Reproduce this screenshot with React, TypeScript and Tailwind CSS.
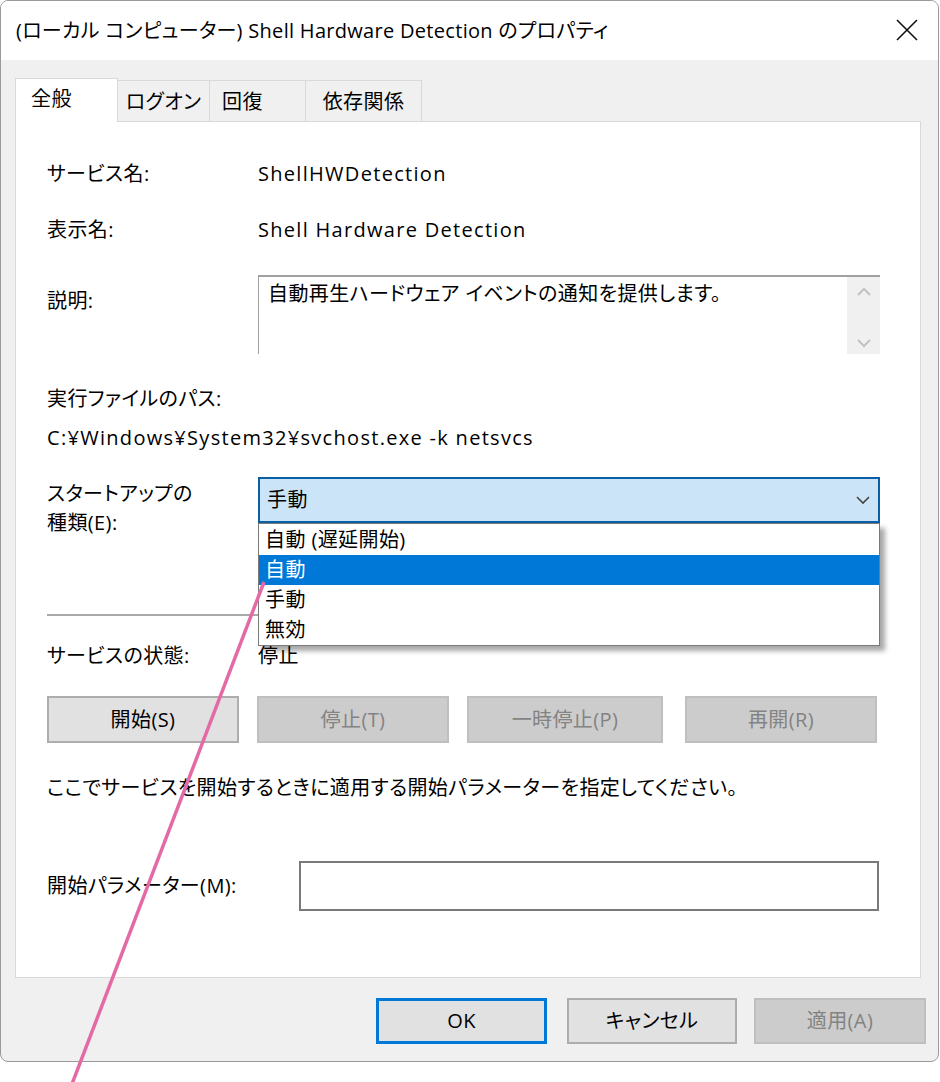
import { ReactNode } from "react";

const font = {
  fontFamily: '"Open Sans", "Noto Sans CJK JP", sans-serif',
  fontFeatureSettings: '"palt"',
};

function Label({ children }: { children: ReactNode }) {
  return <div className="w-[211px] shrink-0">{children}</div>;
}

// latin text in the reference font runs a bit wider
function Latin({ children }: { children: ReactNode }) {
  return <span className="tracking-[1.3px]">{children}</span>;
}

function Button({
  label,
  width,
  enabled,
}: {
  label: string;
  width: string;
  enabled?: boolean;
}) {
  return (
    <div
      className={
        enabled
          ? `${width} h-[47px] flex items-center justify-center border-2 border-[#adadad] bg-[#e1e1e1] text-black`
          : `${width} h-[47px] flex items-center justify-center border-2 border-[#bfbfbf] bg-[#cccccc] text-[#838383]`
      }
    >
      {label}
    </div>
  );
}

export default function App() {
  return (
    <div
      className="relative w-[940px] h-[1082px] bg-white overflow-hidden text-[20px] leading-[28px] tracking-[0.4px] text-black"
      style={font}
    >
      <div className="w-[939px] h-[1062px] border border-[#9a9a9a] rounded-lg bg-[#f0f0f0] overflow-hidden flex flex-col">
        {/* title bar */}
        <div className="h-[59px] bg-white flex items-center justify-between pl-[15px] pr-[19px]">
          <span className="pt-[1px] tracking-[0.3px]">
            (ローカル コンピューター) Shell Hardware Detection のプロパティ
          </span>
          <svg width="24" height="24" viewBox="0 0 24 24" className="mt-[-2px]">
            <path d="M2 2 L22 22 M22 2 L2 22" stroke="#111" strokeWidth="1.6" />
          </svg>
        </div>

        {/* tabs */}
        <div className="flex items-end pl-[14px] pt-[17px] h-[61px]">
          <div className="w-[103px] h-[44px] bg-white border border-b-0 border-[#d9d9d9] pl-[15px] pt-[6px] relative z-10 -mb-px">
            全般
          </div>
          <div className="w-[92px] h-[41px] border border-b-0 border-l-0 border-[#d9d9d9] flex items-center justify-center pt-[1px]">
            ログオン
          </div>
          <div className="w-[96px] h-[41px] border border-b-0 border-l-0 border-[#d9d9d9] pl-[12px] flex items-center pt-[1px]">
            回復
          </div>
          <div className="w-[116px] h-[41px] border border-b-0 border-l-0 border-[#d9d9d9] flex items-center justify-center pt-[1px]">
            依存関係
          </div>
        </div>

        {/* panel */}
        <div className="ml-[14px] w-[906px] h-[857px] bg-white border border-[#d9d9d9] pl-[31px] pr-[40px] pt-[38px]">
          <div className="flex h-[28px] items-center">
            <Label>サービス名:</Label>
            <Latin>ShellHWDetection</Latin>
          </div>
          <div className="flex h-[28px] items-center mt-[28px]">
            <Label>表示名:</Label>
            <Latin>Shell Hardware Detection</Latin>
          </div>
          <div className="flex mt-[31px]">
            <Label>
              <div className="pt-[12px]">説明:</div>
            </Label>
            <div className="w-[622px] h-[79px] border-t-2 border-l border-[#a0a0a0] flex">
              <div className="flex-1 pl-[9px] pt-[3px]">
                自動再生ハードウェア イベントの通知を提供します。
              </div>
              <div className="w-[33px] bg-[#f0f0f0] flex flex-col items-center justify-between pt-[10px] pb-[6px]">
                <svg width="14" height="10" viewBox="0 0 14 10">
                  <path d="M1 8 L7 2 L13 8" fill="none" stroke="#c2c2c2" strokeWidth="2" />
                </svg>
                <svg width="14" height="10" viewBox="0 0 14 10">
                  <path d="M1 2 L7 8 L13 2" fill="none" stroke="#c2c2c2" strokeWidth="2" />
                </svg>
              </div>
            </div>
          </div>
          <div className="h-[28px] mt-[31px] flex items-center">実行ファイルのパス:</div>
          <div className="h-[28px] mt-[11px] flex items-center">
            <Latin>C:¥Windows¥System32¥svchost.exe -k netsvcs</Latin>
          </div>

          <div className="flex items-start mt-[25px]">
            <Label>
              <div className="pt-[2px] leading-[29px]">
                スタートアップの
                <br />
                種類(E):
              </div>
            </Label>
            <div className="relative w-[622px]">
              <div className="h-[46px] border-2 border-[#0a5ea4] bg-[#cce4f7] flex items-center justify-between pl-[7px] pr-[7px]">
                <span>手動</span>
                <svg width="16" height="10" viewBox="0 0 16 10">
                  <path d="M2 2 L8 8 L14 2" fill="none" stroke="#444" strokeWidth="1.6" />
                </svg>
              </div>
              <div className="absolute left-0 top-full w-[622px] h-[123px] bg-white border border-[#7a7a7a] shadow-[5px_5px_5px_rgba(0,0,0,0.35)] z-20 flex flex-col pt-[1px] leading-[30px]">
                <div className="h-[30px] pl-[6px]">自動 (遅延開始)</div>
                <div className="h-[30px] pl-[6px] bg-[#0078d7] text-white">自動</div>
                <div className="h-[30px] pl-[6px]">手動</div>
                <div className="h-[30px] pl-[6px]">無効</div>
              </div>
            </div>
          </div>

          <div className="mt-[77px] h-[2px] bg-[#a9a9a9] w-[831px]" />

          <div className="flex h-[28px] items-center mt-[26px]">
            <Label>サービスの状態:</Label>
            <span>停止</span>
          </div>

          <div className="flex mt-[26px] gap-[18px]">
            <Button label="開始(S)" width="w-[192px]" enabled />
            <Button label="停止(T)" width="w-[192px]" />
            <Button label="一時停止(P)" width="w-[196px]" />
            <div className="ml-[4px]">
              <Button label="再開(R)" width="w-[192px]" />
            </div>
          </div>

          <div className="h-[28px] mt-[31px] flex items-center">
            ここでサービスを開始するときに適用する開始パラメーターを指定してください。
          </div>

          <div className="flex items-center mt-[59px]">
            <div className="w-[252px] shrink-0">開始パラメーター(M):</div>
            <div className="w-[580px] h-[50px] border-2 border-[#7a7a7a] bg-white" />
          </div>
        </div>

        {/* bottom buttons */}
        <div className="flex justify-end pr-[12px] mt-[20px]">
          <div className="w-[171px] h-[46px] border-[3px] border-[#0078d7] bg-[#e1e1e1] flex items-center justify-center">
            OK
          </div>
          <div className="ml-[20px] w-[170px] h-[46px] border-2 border-[#adadad] bg-[#e1e1e1] flex items-center justify-center">
            キャンセル
          </div>
          <div className="ml-[17px] w-[172px] h-[46px] border-2 border-[#bfbfbf] bg-[#cccccc] text-[#838383] flex items-center justify-center">
            適用(A)
          </div>
        </div>
      </div>

      <svg className="absolute inset-0 pointer-events-none z-30" width="940" height="1082">
        <line x1="264" y1="582" x2="72" y2="1084" stroke="#e46aa6" strokeWidth="3.5" />
      </svg>
    </div>
  );
}
